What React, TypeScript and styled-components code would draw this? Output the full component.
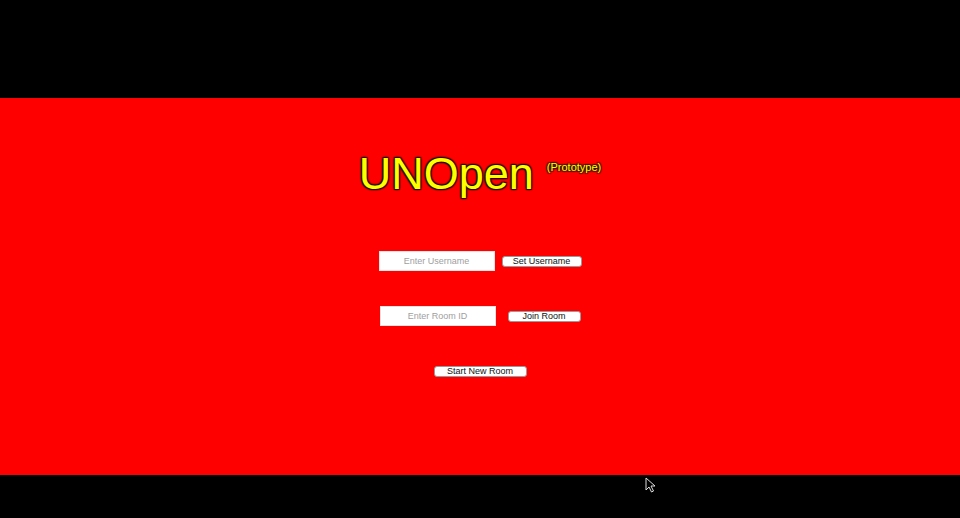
import React from "react";
import styled, { createGlobalStyle } from "styled-components";

const Global = createGlobalStyle`
  html, body { margin: 0; padding: 0; background: #000; }
  body { font-family: "Liberation Sans", Arial, sans-serif; overflow: hidden; }
`;

const Page = styled.div`
  position: relative;
  width: 960px;
  height: 518px;
  background: #000;
  display: flex;
  flex-direction: column;
`;

const TopBar = styled.div`
  height: 98px;
  flex: none;
`;

const Stage = styled.main`
  height: 377px;
  flex: none;
  background: #ff0000;
  display: flex;
  flex-direction: column;
  align-items: center;
  padding-top: 53px;
  box-sizing: border-box;
`;

const TitleRow = styled.div`
  display: flex;
  align-items: flex-start;
  gap: 13px;
  height: 45px;
`;

const outline = `
  1px 1px 1px #1a1200, -1px -1px 1px #1a1200, 1px -1px 1px #1a1200, -1px 1px 1px #1a1200,
  0 0 3px rgba(0,0,0,0.8)
`;

const Title = styled.h1`
  margin: 0;
  font-size: 45px;
  line-height: 45px;
  font-weight: 400;
  color: #ffff00;
  text-shadow: ${outline};
`;

const Tag = styled.span`
  margin-top: 9px;
  font-size: 11px;
  line-height: 14px;
  color: #ffff00;
  text-shadow: 1px 1px 1px #2a1a00, -1px -1px 1px #2a1a00, 1px -1px 1px #2a1a00, -1px 1px 1px #2a1a00;
`;

const Form = styled.div`
  margin-top: 55px;
  display: flex;
  flex-direction: column;
  align-items: center;
  gap: 35px;
`;

const Row = styled.div<{ $gap: number }>`
  height: 20px;
  display: flex;
  align-items: center;
  gap: ${(p) => p.$gap}px;
`;

const Field = styled.input`
  width: 116px;
  height: 20px;
  box-sizing: border-box;
  border: 1px solid #e4e4e4;
  background: #fff;
  outline: none;
  padding: 0 4px;
  font-family: "Liberation Sans", Arial, sans-serif;
  font-size: 9px;
  text-align: center;
  color: #222;
  &::placeholder { color: #a0a0a0; }
`;

const Button = styled.button<{ $w: number }>`
  width: ${(p) => p.$w}px;
  height: 11px;
  box-sizing: border-box;
  padding: 0;
  background: #fff;
  border: 1px solid #9a9a9a;
  border-radius: 3px;
  font-family: "Liberation Sans", Arial, sans-serif;
  font-size: 9px;
  line-height: 9px;
  color: #111;
  cursor: pointer;
`;

const Cursor = styled.svg`
  position: absolute;
  left: 645px;
  top: 477px;
`;

export default function App() {
  return (
    <Page>
      <Global />
      <TopBar />
      <Stage>
        <TitleRow>
          <Title>UNOpen</Title>
          <Tag>(Prototype)</Tag>
        </TitleRow>
        <Form>
          <Row $gap={7}>
            <Field placeholder="Enter Username" />
            <Button $w={80}>Set Username</Button>
          </Row>
          <Row $gap={12}>
            <Field placeholder="Enter Room ID" />
            <Button $w={73}>Join Room</Button>
          </Row>
          <Row $gap={0}>
            <Button $w={93}>Start New Room</Button>
          </Row>
        </Form>
      </Stage>
      <Cursor width="12" height="16" viewBox="0 0 12 16">
        <path d="M1 1 L1 13 L4 10 L6.5 15 L8.5 14 L6 9 L10 9 Z" fill="#000" stroke="#ddd" strokeWidth="1" strokeLinejoin="round" />
      </Cursor>
    </Page>
  );
}
